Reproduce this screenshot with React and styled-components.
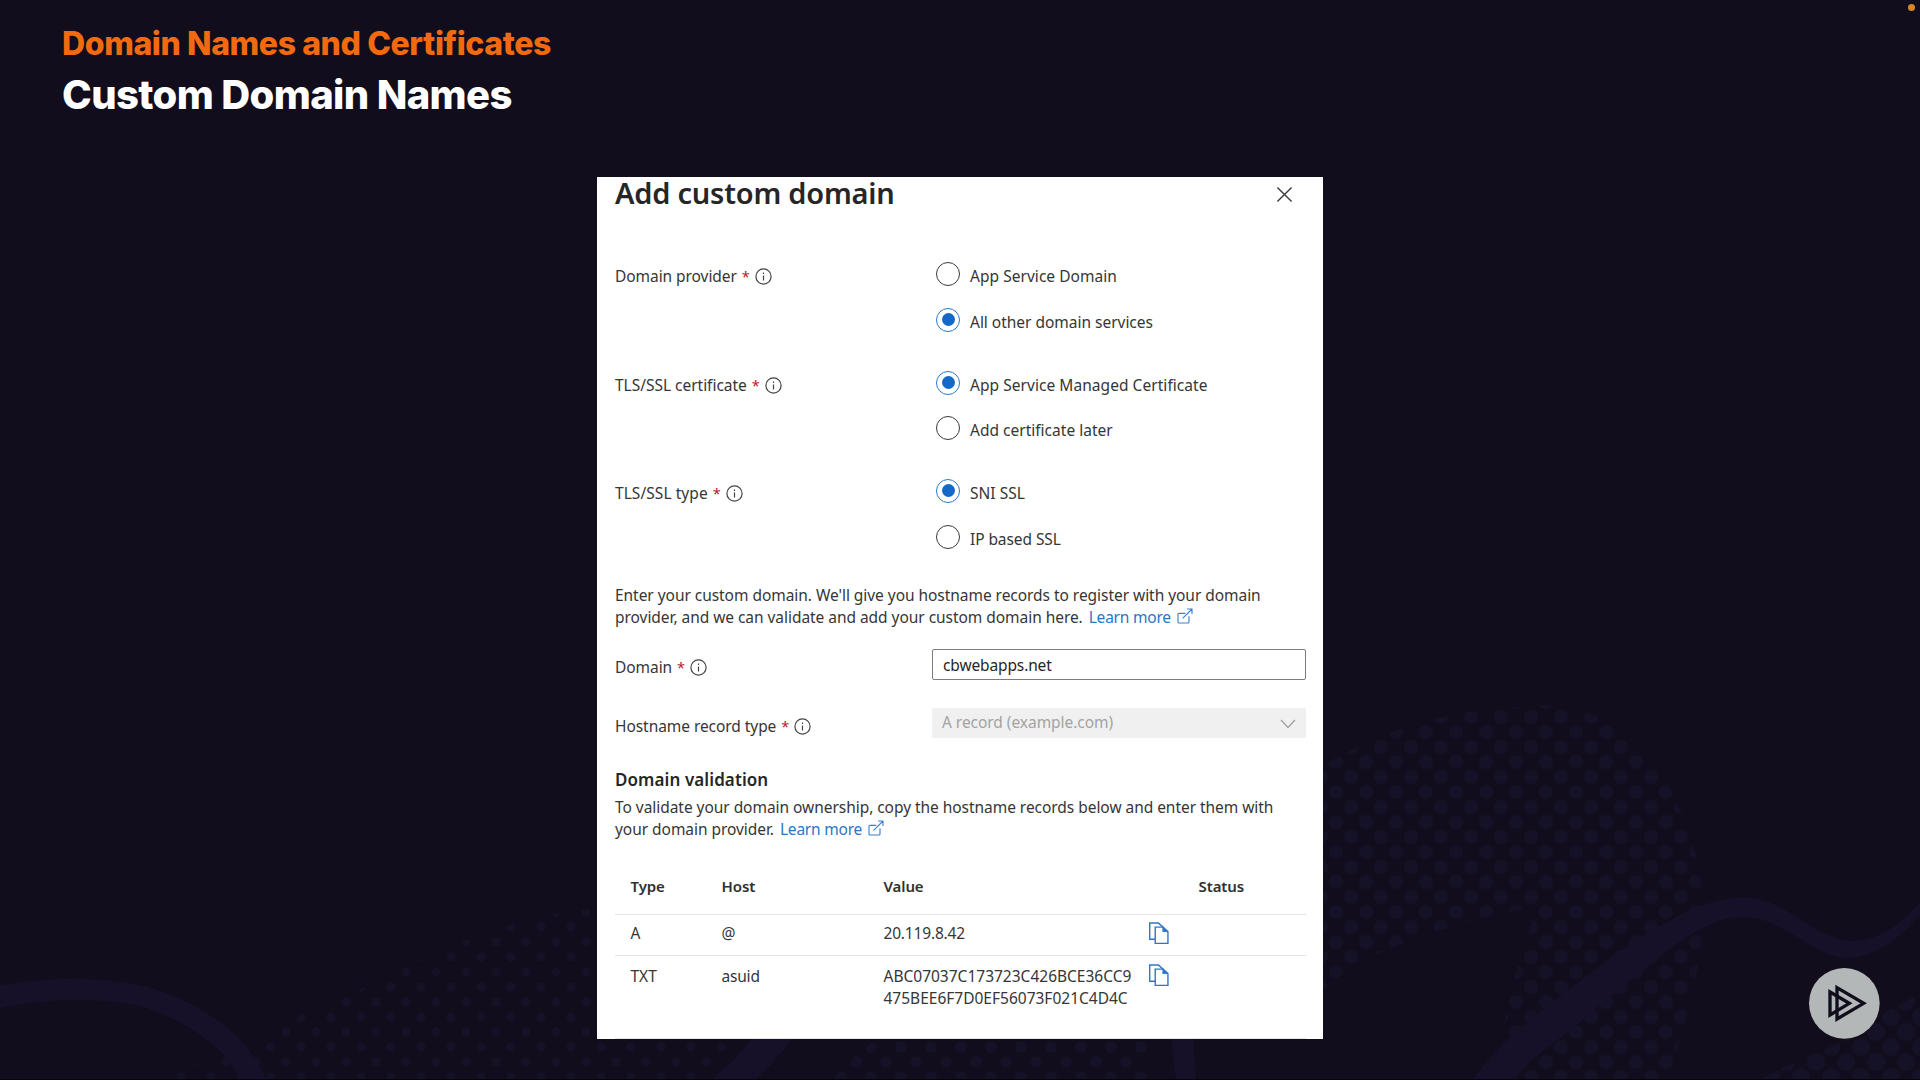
import React from 'react';
import styled, { createGlobalStyle } from 'styled-components';

const GlobalStyle = createGlobalStyle`
  *, *::before, *::after { box-sizing: border-box; }
  body { margin: 0; background: #110d1c; }
`;

const Slide = styled.main`
  position: relative;
  width: 1920px;
  height: 1080px;
  overflow: hidden;
  background: #110d1c;
  border-bottom: 1px solid #06050c;
  font-family: 'Noto Sans', 'Open Sans', sans-serif;
`;

const Artwork = styled.svg`
  position: absolute;
  inset: 0;
  width: 1920px;
  height: 1080px;
`;

const Content = styled.div`
  position: relative;
  display: flex;
  flex-direction: column;
  height: 1080px;
`;

const Header = styled.header`
  height: 177px;
  padding: 24px 0 0 62px;
  font-family: Inter, 'Liberation Sans', sans-serif;
  font-weight: 800;
  white-space: nowrap;
`;

const Topic = styled.div`
  font-size: 32px;
  line-height: 40px;
  letter-spacing: -0.4px;
  color: #f26a10;
`;

const Headline = styled.h1`
  margin: 6px 0 0;
  font-size: 40px;
  line-height: 50px;
  letter-spacing: -0.62px;
  font-weight: 800;
  color: #fff;
`;

const Panel = styled.section`
  align-self: flex-start;
  display: flex;
  flex-direction: column;
  width: 726px;
  height: 862px;
  margin-left: 597px;
  padding: 0 17px 0 18px;
  background: #fff;
  color: #363636;
  font-size: 15.5px;
  line-height: 22px;
  letter-spacing: -0.045px;
  white-space: nowrap;
`;

const TitleBar = styled.div`
  display: flex;
  justify-content: space-between;
  height: 30px;
  padding-right: 13px;
`;

const Title = styled.h2`
  margin: 0;
  font-size: 29px;
  line-height: 31px;
  font-weight: 600;
  letter-spacing: -0.22px;
  color: #262626;
`;

const CloseIcon = styled.svg`
  width: 17px;
  height: 17px;
  margin-top: 9px;
  stroke: #3c3c3c;
  stroke-width: 1.5;
`;

const Groups = styled.div`
  display: flex;
  flex-direction: column;
  gap: 41px;
  margin-top: 58px;
`;

const Group = styled.div`
  display: grid;
  grid-template-columns: 321px 1fr;
  height: ${(p) => p.$gap + 44}px;
`;

const Label = styled.div`
  display: flex;
  height: 22px;
  letter-spacing: ${(p) => p.$tracking || -0.06}px;
`;

const Star = styled.span`
  margin: 0 5px 0 5px;
  font-size: 14.5px;
  color: #b3202c;
`;

const InfoIcon = styled.svg`
  width: 17px;
  height: 17px;
  margin-top: 3px;
`;

const Options = styled.div`
  display: flex;
  flex-direction: column;
  gap: ${(p) => p.$gap}px;
`;

const Option = styled.div`
  display: flex;
  height: 22px;
  gap: 10px;
  letter-spacing: ${(p) => p.$tracking || 0}px;
`;

const Radio = styled.span`
  display: grid;
  place-items: center;
  width: 24px;
  height: 24px;
  margin-top: -3.5px;
  border: 1.5px solid ${(p) => (p.$on ? '#2b78cc' : '#3a3a3a')};
  border-radius: 50%;
  &::after {
    content: '';
    width: 13px;
    height: 13px;
    border-radius: 50%;
    background: ${(p) => (p.$on ? '#1469c7' : 'transparent')};
  }
`;

const Paragraph = styled.p`
  margin: ${(p) => p.$top}px 0 0;
  height: 44px;
`;

const Link = styled.a`
  margin-left: 2px;
  color: #2a76c6;
  letter-spacing: -0.22px;
`;

const ExternalIcon = styled.svg`
  width: 16px;
  height: 16px;
  margin-left: 6px;
  vertical-align: -0.5px;
  fill: none;
  stroke: #3b80d0;
  stroke-width: 3.4;
`;

const Field = styled.div`
  display: grid;
  grid-template-columns: 317px 374px;
  align-items: start;
  margin-top: ${(p) => p.$top}px;
  & > ${Label} { margin-top: 7px; }
`;

const TextBox = styled.div`
  height: 31px;
  padding: 4px 0 0 10px;
  border: 1.5px solid #7c7c7c;
  border-radius: 2px;
  letter-spacing: -0.13px;
  color: #262626;
`;

const SelectBox = styled.div`
  display: flex;
  justify-content: space-between;
  height: 30px;
  padding: 3px 10px 0 10px;
  border-radius: 2px;
  background: #f0f0f0;
  color: #a3a3a3;
`;

const Chevron = styled.svg`
  width: 16px;
  height: 10px;
  margin-top: 8px;
  fill: none;
  stroke: #a0a0a0;
  stroke-width: 1.3;
`;

const SectionTitle = styled.h3`
  margin: 31px 0 0;
  font-size: 17px;
  line-height: 22px;
  font-weight: 600;
  letter-spacing: 0.09px;
  color: #262626;
`;

const Table = styled.div`
  width: 691px;
  margin-top: 26px;
`;

const Row = styled.div`
  display: grid;
  grid-template-columns: 91px 162px 265px 50px 1fr;
  height: ${(p) => p.$h}px;
  padding: ${(p) => p.$pad}px 0 0 15.5px;
  border-bottom: 1px solid #e4e4e4;
`;

const HeadRow = styled(Row)`
  font-size: 15px;
  font-weight: 600;
  letter-spacing: -0.1px;
  color: #303030;
`;

const Cell = styled.span`
  white-space: pre;
  letter-spacing: ${(p) => p.$tracking || 0}px;
`;

const CopyIcon = styled.svg`
  width: 20px;
  height: 22px;
  margin-top: ${(p) => p.$top}px;
  fill: #fff;
  stroke: #2f74c4;
  stroke-width: 4;
`;

const Logo = styled.svg`
  position: absolute;
  left: 1808px;
  top: 967px;
  width: 72px;
  height: 72px;
`;

const Marker = styled.span`
  position: absolute;
  left: 1908px;
  top: 4px;
  width: 7px;
  height: 7px;
  border-radius: 50%;
  background: #d88528;
`;

const DotPattern = ({ id, r }) => (
  <pattern id={id} width="30" height="30" x="1" y="12" patternUnits="userSpaceOnUse">
    <circle cx="15" cy="0" r={r} />
    <circle cx="15" cy="30" r={r} />
    <circle cx="0" cy="15" r={r} />
    <circle cx="30" cy="15" r={r} />
  </pattern>
);

const Background = () => (
  <Artwork viewBox="0 0 1920 1080" aria-hidden="true">
    <defs>
      <g fill="#151126">
        <DotPattern id="dotsSmall" r="4.4" />
        <DotPattern id="dotsMedium" r="5.8" />
        <DotPattern id="dotsLarge" r="7.1" />
        <DotPattern id="dotsHuge" r="9" />
      </g>
    </defs>
    <path fill="url(#dotsSmall)" d="M160 1080C240 1050 290 1015 340 1000C420 960 500 915 600 908L740 1040L705 1080Z" />
    <path fill="url(#dotsMedium)" d="M830 1080C850 1062 860 1050 882 1035H1150V1080Z" />
    <path fill="url(#dotsLarge)" d="M1300 780C1360 740 1430 709 1530 706C1610 700 1655 750 1680 810C1705 865 1710 920 1694 985C1685 1025 1675 1055 1668 1080H1508C1490 1030 1522 960 1536 907C1470 915 1385 950 1350 965C1335 985 1315 995 1300 1000Z" />
    <path fill="url(#dotsHuge)" d="M1760 1080C1790 1062 1830 1050 1852 1035C1875 1018 1900 1002 1920 995V1080Z" />
    <g fill="#161128">
      <path d="M1472 1080C1500 1042 1535 1015 1568 990C1610 957 1645 933 1680 915C1710 899 1745 892 1771 903C1800 915 1822 939 1850 941C1882 941 1905 920 1920 902V916C1900 935 1882 956 1848 958C1815 957 1790 925 1755 918C1725 912 1695 930 1665 953C1630 980 1595 1011 1560 1038C1540 1053 1525 1064 1515 1080Z" />
      <path d="M755 1036H793C785 1050 770 1066 755 1080H710C735 1062 743 1048 755 1036Z" />
      <path d="M1171 1036H1193L1196 1080H1176Z" />
      <path d="M0 985C60 975 120 978 155 989C210 1008 252 1040 266 1080H241C225 1045 180 1018 140 1006C90 996 40 1000 0 1008Z" />
    </g>
  </Artwork>
);

const Info = () => (
  <InfoIcon viewBox="0 0 17 17" fill="none" stroke="#444" strokeWidth="1.2">
    <circle cx="8.5" cy="8.5" r="7.6" />
    <path d="M8.5 7.4V12.6M8.5 4.4V6" />
  </InfoIcon>
);

const FieldLabel = ({ text, tracking }) => (
  <Label $tracking={tracking}>
    {text}
    <Star>*</Star>
    <Info />
  </Label>
);

const LearnMore = () => (
  <Link>
    Learn more
    <ExternalIcon viewBox="203 51 48 48">
      <path d="M228 67H209Q206 67 206 70V93Q206 96 209 96H236Q239 96 239 93V76M220 82L248 54M233 54H248V69" />
    </ExternalIcon>
  </Link>
);

const Copy = ({ top }) => (
  <CopyIcon $top={top} viewBox="146 68 58 64">
    <path d="M148 71H173L187 83V118H148Z" />
    <path d="M164 83H187L201 96V130H164Z" />
    <path d="M186 83V96H201Z" fill="#2f74c4" strokeWidth="2" />
  </CopyIcon>
);

const groups = [
  { label: 'Domain provider', gap: 24, options: [['App Service Domain', false, 0.04], ['All other domain services', true, -0.02]] },
  { label: 'TLS/SSL certificate', gap: 23, tracking: -0.02, options: [['App Service Managed Certificate', true, 0.05], ['Add certificate later', false, 0.01]] },
  { label: 'TLS/SSL type', gap: 24, tracking: 0.06, options: [['SNI SSL', true, 0.04], ['IP based SSL', false, -0.08]] },
];

export default function App() {
  return (
    <>
      <GlobalStyle />
      <Slide>
        <Background />
        <Content>
          <Header>
            <Topic>Domain Names and Certificates</Topic>
            <Headline>Custom Domain Names</Headline>
          </Header>
          <Panel>
            <TitleBar>
              <Title>Add custom domain</Title>
              <CloseIcon viewBox="0 0 18 18">
                <path d="M1.5 1.5L16.5 16.5M16.5 1.5L1.5 16.5" />
              </CloseIcon>
            </TitleBar>
            <Groups>
              {groups.map((g) => (
                <Group key={g.label} $gap={g.gap}>
                  <FieldLabel text={g.label} tracking={g.tracking} />
                  <Options $gap={g.gap}>
                    {g.options.map(([name, on, tracking]) => (
                      <Option key={name} $tracking={tracking}>
                        <Radio $on={on} />
                        {name}
                      </Option>
                    ))}
                  </Options>
                </Group>
              ))}
            </Groups>
            <Paragraph $top={34}>
              Enter your custom domain. We'll give you hostname records to register with your domain
              <br />
              provider, and we can validate and add your custom domain here. <LearnMore />
            </Paragraph>
            <Field $top={21}>
              <FieldLabel text="Domain" />
              <TextBox>cbwebapps.net</TextBox>
            </Field>
            <Field $top={28}>
              <FieldLabel text="Hostname record type" tracking={-0.06} />
              <SelectBox>
                A record (example.com)
                <Chevron viewBox="0 0 16 10">
                  <path d="M1 1L8 8.5L15 1" />
                </Chevron>
              </SelectBox>
            </Field>
            <SectionTitle>Domain validation</SectionTitle>
            <Paragraph $top={5}>
              To validate your domain ownership, copy the hostname records below and enter them with
              <br />
              your domain provider. <LearnMore />
            </Paragraph>
            <Table>
              <HeadRow $h={49} $pad={9}>
                <span>Type</span>
                <span>Host</span>
                <span>Value</span>
                <span />
                <span>Status</span>
              </HeadRow>
              <Row $h={41} $pad={7}>
                <Cell>A</Cell>
                <Cell>@</Cell>
                <Cell $tracking={-0.18}>20.119.8.42</Cell>
                <Copy top={0} />
              </Row>
              <Row $h={83} $pad={9}>
                <Cell>TXT</Cell>
                <Cell $tracking={-0.2}>asuid</Cell>
                <Cell>{'ABC07037C173723C426BCE36CC9\n475BEE6F7D0EF56073F021C4D4C'}</Cell>
                <Copy top={-1} />
              </Row>
            </Table>
          </Panel>
        </Content>
        <Logo viewBox="84 81 216 216" fill="none" stroke="#110d1c" strokeWidth="10">
          <circle cx="193" cy="190" r="106" fill="#b3b7b7" stroke="none" />
          <path d="M150 156L208 190L150 225Z" />
          <path d="M171 143L251 190L171 237Z" />
        </Logo>
        <Marker />
      </Slide>
    </>
  );
}
